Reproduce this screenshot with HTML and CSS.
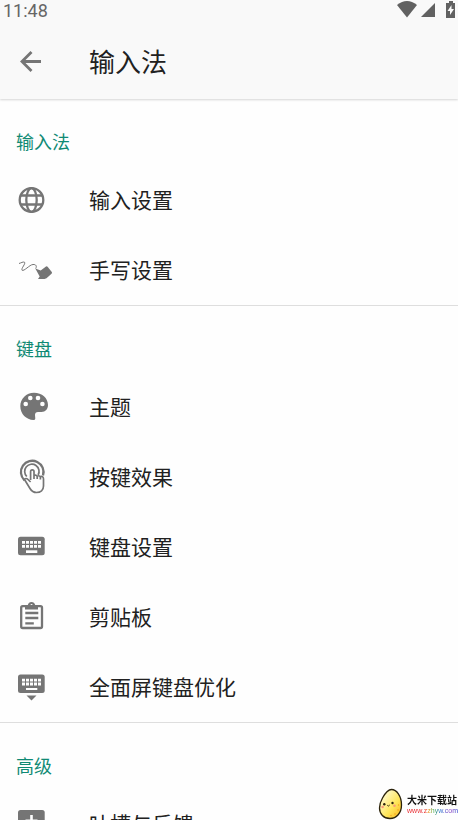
FILE: index.html
```html
<!DOCTYPE html>
<html lang="zh-CN">
<head>
<meta charset="utf-8">
<meta name="viewport" content="width=device-width, initial-scale=1">
<title>输入法</title>
<link rel="stylesheet" href="styles.css">
</head>
<body>
<header class="top">
  <div class="status">
    <time class="clock">11:48</time>
    <svg class="status-icons" viewBox="0 0 62 20" aria-hidden="true">
      <path d="M1 5Q11-3 21 5L11 17.500z"/>
      <path d="M39 3v14H25z"/>
      <path d="M50 3h3V1h4v2h2v15h-9z"/>
      <path class="bolt" d="M55.500 5l-4 6h2.500v4l4-6h-2.500z"/>
    </svg>
  </div>
  <div class="bar">
    <button class="back" type="button" aria-label="返回">
      <svg class="icon" viewBox="0 0 40 40" aria-hidden="true"><path class="line thick" d="M29 19.500H10M19.500 10L10 19.500l9.500 9.500"/></svg>
    </button>
    <h1 class="title">输入法</h1>
  </div>
</header>
<main class="settings">
  <section class="group">
    <h2 class="label">输入法</h2>
    <a class="row" href="#input">
      <svg class="icon" viewBox="0 0 40 40" aria-hidden="true"><g class="line"><circle cx="19.500" cy="20" r="11.800"/><ellipse cx="19.500" cy="20" rx="5.200" ry="11.800"/><path d="M9 15.500h21M9 24.500h21"/></g></svg>
      <span class="name">输入设置</span>
    </a>
    <a class="row" href="#handwriting">
      <svg class="icon" viewBox="0 0 40 40" aria-hidden="true"><path class="line thin" d="M7 13.500c2-.5 4-2 5.500-1.300 1.500 1.500-3.500 6-2.500 8 2 1.500 7.500-5.500 11-5.700 3-.2 4 1.500 2.800 4"/><path d="M23.300 18.500l5.400 2L34 16.500q1-.5 1.800.5l4 5q.5 1-.3 1.800l-5 4.500-2 .7h-6.500l1.700-2.500z"/></svg>
      <span class="name">手写设置</span>
    </a>
  </section>
  <section class="group">
    <h2 class="label">键盘</h2>
    <a class="row" href="#theme">
      <svg class="icon" viewBox="0 0 40 40" aria-hidden="true"><path fill-rule="evenodd" d="M22 5.700C14.300 5.700 8.300 11.800 8.300 19.300S14.300 33 21.500 33q1.800 0 1.800-1.500l-.3-3.500q0-3 3-3h3.500c4 0 6.500-3 6.500-7C36 11 30 5.700 22 5.700z"/><g class="hole"><circle cx="13.700" cy="17" r="2.300"/><circle cx="18.300" cy="11" r="2.300"/><circle cx="26" cy="11" r="2.300"/><circle cx="30.400" cy="17" r="2.300"/></g></svg>
      <span class="name">主题</span>
    </a>
    <a class="row" href="#key-effect">
      <svg class="icon" viewBox="0 0 40 40" aria-hidden="true"><path class="line" d="M12.500 23.300A11.300 11.300 0 1 1 31 18.500"/><path class="line medium" d="M14.800 19.500a7.200 7.200 0 1 1 11.300-1.500M18.600 23v-8.500q0-1.700 1.700-1.700t1.700 1.700V22M22 18.500q2.500-1 3.200 1v2.500M25.200 19q2.500-.8 3.200 1v2.500M28.400 19.500q3.100-.6 3.100 2.500v7c0 4-3 6.500-7 6.500-3.500 0-5-1.500-6.500-4l-5.500-9q1.500-2 3.500 0l2.600 2.500"/></svg>
      <span class="name">按键效果</span>
    </a>
    <a class="row" href="#keyboard">
      <svg class="icon" viewBox="0 0 40 40" aria-hidden="true"><rect x="6" y="9.700" width="26.700" height="18.600" rx="2.500"/><path class="keys" d="M10 15.300h19M10 19.300h19"/><path class="hole" d="M14 23.300h11.300V26H14z"/></svg>
      <span class="name">键盘设置</span>
    </a>
    <a class="row" href="#clipboard">
      <svg class="icon" viewBox="0 0 40 40" aria-hidden="true"><rect class="line" x="9.200" y="9.200" width="20.800" height="21.800" rx="1.500"/><path fill-rule="evenodd" d="M13 8h2.800q.8-3 3.700-3t3.700 3H26v4.500H13zM19.500 7a1.200 1.200 0 1 0 .1 0z"/><path class="line" d="M13.300 16h13M13.300 21h13M13.300 26.300h8.500"/></svg>
      <span class="name">剪贴板</span>
    </a>
    <a class="row" href="#fullscreen">
      <svg class="icon" viewBox="0 0 40 40" aria-hidden="true"><rect x="6" y="7.500" width="26.700" height="18.500" rx="2.500"/><path class="keys" d="M10 13.200h19M10 17h19"/><path class="hole" d="M14 21h11.300v2H14z"/><path d="M14.500 28.500h10L19.500 33.500z"/></svg>
      <span class="name">全面屏键盘优化</span>
    </a>
  </section>
  <section class="group">
    <h2 class="label">高级</h2>
    <a class="row" href="#feedback">
      <svg class="icon" viewBox="0 0 40 40" aria-hidden="true"><rect x="6" y="6" width="26.700" height="26" rx="2.500"/><path class="hole" d="M18.200 11h2.600v4.500h4.700v2.500h-4.700v5h-2.600v-5h-4.700v-2.500h4.700z"/></svg>
      <span class="name">吐槽与反馈</span>
    </a>
  </section>
</main>
<aside class="watermark">
  <svg class="egg" viewBox="0 0 25 32" aria-hidden="true">
    <defs><linearGradient id="shell" x1="0" y1="0" x2="1" y2="1"><stop offset=".2" stop-color="#fff8c4"/><stop offset=".6" stop-color="#ffe65a"/><stop offset="1" stop-color="#f7b21c"/></linearGradient></defs>
    <path d="M13.500 1.500C9.500 1.500 7 5.500 4.500 10 2.500 13.500 1.500 16.500 1.500 20c0 6 4 10.500 10.500 10.500S23.500 25 23.500 17C23.500 8 18.500 1.500 13.500 1.500z" fill="url(#shell)" stroke="#2b230c" stroke-width="1.300"/>
    <g fill="#2b230c"><circle cx="6.300" cy="16.300" r="1.200"/><circle cx="14.500" cy="15" r="1.200"/></g>
    <path d="M9.300 17.300q1.300 1.600 2.400-.3" fill="none" stroke="#2b230c"/>
    <circle cx="4.600" cy="19" r="1.300" fill="#f99a7a"/><circle cx="16.500" cy="17.800" r="1.300" fill="#f99a7a"/>
    <g fill="#f6a31a"><circle cx="20" cy="22" r=".8"/><circle cx="17" cy="26" r=".8"/><circle cx="13" cy="27.500" r=".7"/><circle cx="20.500" cy="17" r=".7"/></g>
  </svg>
  <div class="brand">
    <strong class="site">大米下载站</strong>
    <span class="url">www.zzhyw.com</span>
  </div>
</aside>
</body>
</html>
```
FILE: styles.css
```css
* { box-sizing: border-box; }
body {
  margin: 0;
  height: 100vh;
  display: flex;
  flex-direction: column;
  background: #fefefe;
  color: #212121;
  font-family: Roboto, "Noto Sans CJK SC", sans-serif;
}
h1, h2 { margin: 0; font-weight: 400; }
.top {
  flex: none;
  background: #f9f9f9;
  box-shadow: 0 1px 2px rgba(0, 0, 0, 0.16);
  z-index: 1;
}
.status {
  display: flex;
  justify-content: space-between;
  height: 24px;
  padding-left: 3px;
}
.clock { font-size: 18px; line-height: 22px; color: #666; }
.status-icons { width: 62px; height: 20px; fill: #616161; }
.status-icons .bolt { fill: #f9f9f9; }
.bar, .row {
  display: flex;
  align-items: center;
  gap: 37px;
  padding: 0 12px;
}
.bar { height: 75px; }
.back { padding: 0; border: 0; background: none; display: flex; }
.title { padding-top: 2px; font-size: 26px; line-height: 36px; }
.settings { flex: 1; min-height: 0; overflow-y: auto; scrollbar-width: none; }
.group + .group { border-top: 1px solid #dedede; }
.label {
  padding: 31px 16px 9px;
  font-size: 18px;
  line-height: 26px;
  color: #108a74;
}
.row {
  height: 70px;
  font-size: 21px;
  line-height: 30px;
  color: inherit;
  text-decoration: none;
}
.name { padding-top: 2px; }
.icon { flex: none; width: 40px; height: 40px; fill: #757575; }
.line { fill: none; stroke: #757575; stroke-width: 2.3; }
.thick { stroke-width: 2.8; }
.medium { stroke-width: 1.7; }
.thin { stroke-width: 1; }
.hole { fill: #fefefe; }
.keys { fill: none; stroke: #fefefe; stroke-width: 2.8; stroke-dasharray: 3 1; }
.watermark {
  position: fixed;
  right: 0;
  bottom: 0;
  z-index: 2;
  display: flex;
  align-items: center;
  gap: 4px;
}
.egg { width: 25px; height: 32px; }
.brand { display: flex; flex-direction: column; padding-top: 2px; }
.site { font-size: 10px; line-height: 12px; font-weight: 700; color: #111; }
.url {
  font: 7px/8px "Liberation Sans", sans-serif;
  color: transparent;
  background: linear-gradient(90deg, #e8262c 35%, #f49a23 42%, #45ad48 52%, #2874d0 65%, #8c3cc4 85%, #2643cc);
  background-clip: text;
}
```
